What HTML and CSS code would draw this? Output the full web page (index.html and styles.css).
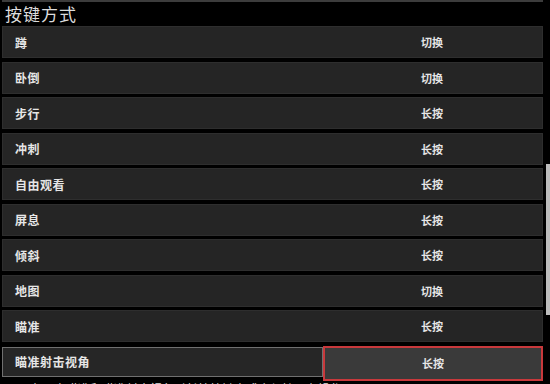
FILE: index.html
```html
<!DOCTYPE html>
<html lang="zh-CN">
<head>
	<meta charset="UTF-8">
	<title>按键方式</title>
	<link rel="stylesheet" href="styles.css">
</head>
<body>
	<div class="edge"></div>
	<h2 class="title">按键方式</h2>
	<div class="panel">
		<ul class="list">
			<li><span class="name">蹲</span><span class="val">切换</span></li>
			<li><span class="name">卧倒</span><span class="val">切换</span></li>
			<li><span class="name">步行</span><span class="val">长按</span></li>
			<li><span class="name">冲刺</span><span class="val">长按</span></li>
			<li><span class="name">自由观看</span><span class="val">长按</span></li>
			<li><span class="name">屏息</span><span class="val">长按</span></li>
			<li><span class="name">倾斜</span><span class="val">长按</span></li>
			<li><span class="name">地图</span><span class="val">切换</span></li>
			<li><span class="name">瞄准</span><span class="val">长按</span></li>
			<li class="cur"><span class="name">瞄准射击视角</span><span class="val">长按</span></li>
			<li class="tip">在开启瞄准和瞄准射击视角时长按按键方式会保持原有操作</li>
		</ul>
		<div class="track"><div class="thumb"></div></div>
	</div>
</body>
</html>
```

FILE: styles.css
```css
*{
	margin: 0;
	padding: 0;
	list-style: none;
	box-sizing: border-box;
}
html,body{
	background: #000;
	height: 384px;
	overflow: hidden;
}
body{
	font-family: "Noto Sans CJK SC", "Noto Sans", sans-serif;
	color: #e6e6e6;
}
.edge{
	height: 2px;
	margin: 0 7px 0 2px;
	background: #3c3c3c;
}
.title{
	height: 24px;
	line-height: 24px;
	padding-left: 5px;
	font-size: 17px;
	font-weight: normal;
	letter-spacing: 1px;
	color: #dcdcdc;
}
.panel{
	display: flex;
	gap: 3px;
	padding-left: 2px;
}
.list{
	width: 541px;
	display: flex;
	flex-direction: column;
	gap: 3.5px;
}
.list li{
	display: flex;
	height: 32px;
	align-items: center;
	background: #252525;
	border: 1px solid #2e2e2e;
	font-weight: bold;
}
.name{
	flex: 1;
	padding-left: 12px;
	font-size: 12px;
	letter-spacing: 0.5px;
}
.val{
	width: 220px;
	text-align: center;
	font-size: 11px;
}
.list .cur{
	border: none;
	background: none;
	align-items: stretch;
}
.cur .name{
	display: flex;
	align-items: center;
	border: 1px solid #707070;
	background: #262626;
	margin: 1px 0 1px;
}
.cur .val{
	display: flex;
	align-items: center;
	justify-content: center;
	border: 2px solid #c8393c;
	background: #3a3a3a;
	height: 35px;
}
.list .tip{
	background: none;
	border: none;
	height: 14px;
	margin-top: -1px;
	padding-left: 28px;
	font-size: 12px;
	font-weight: normal;
	color: #dedede;
	align-items: flex-start;
}
.track{
	width: 4px;
}
.thumb{
	margin-top: 138px;
	height: 151px;
	background: #bdbdbd;
}
```
